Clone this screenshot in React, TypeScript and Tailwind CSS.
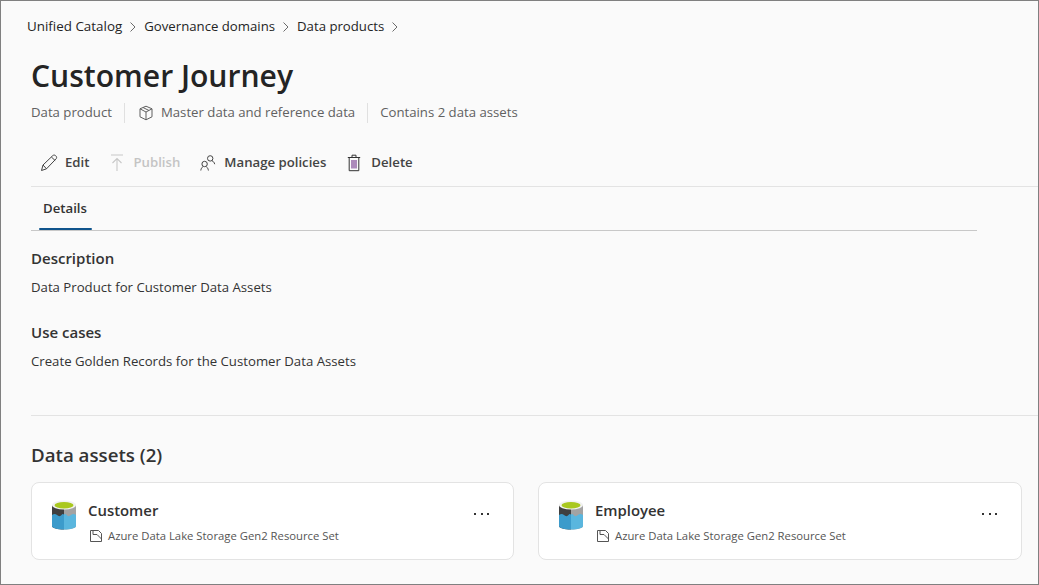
const font = { fontFamily: '"Open Sans", "Noto Sans", sans-serif' };

function Chevron() {
  return (
    <svg width="8" height="12" viewBox="0 0 8 12" fill="none" stroke="#6b6b6b" strokeWidth="1" className="mx-[7px] shrink-0">
      <path d="M1.500 1.500 6 6l-4.500 4.500" />
    </svg>
  );
}

function BoxIcon() {
  return (
    <svg width="16" height="16" viewBox="0 0 16 16" fill="none" stroke="#5f5f5f" strokeWidth="1">
      <path d="M8 1.200 14 3.800v8L8 14.800 2 11.800v-8z" />
      <path d="M2 3.800 8 7l6-3.200M8 7v7.800M5 2.500l6 3" />
    </svg>
  );
}

function PencilIcon() {
  return (
    <svg width="18" height="18" viewBox="0 0 18 18" fill="none" stroke="#444" strokeWidth="1">
      <path d="M1.500 16.500 3 11 12.800 1.600c.8-.7 1.900-.7 2.700 0l.6.600c.7.800.7 1.900 0 2.600L6.500 14.800z" />
      <path d="m3 11 3.500 3.800M11.400 3l3.800 3.600" />
    </svg>
  );
}

function PublishIcon() {
  return (
    <svg width="14" height="18" viewBox="0 0 14 18" fill="none" stroke="#c8c8c8" strokeWidth="1.100">
      <path d="M1 1h12M7 17V4.500M2.500 9 7 4.500 11.500 9" />
    </svg>
  );
}

function PeopleIcon() {
  return (
    <svg width="16" height="16" viewBox="0 0 16 16" fill="none" stroke="#444" strokeWidth="1">
      <circle cx="10.200" cy="3.400" r="2.700" />
      <circle cx="4.600" cy="9" r="2.700" />
      <path d="M.8 15.500c.2-1.800 1-3 2-3.800M8.400 15.500c-.2-1.800-1-3-2-3.800M12 5.700c1.400.7 2.300 1.800 2.700 3.500" />
    </svg>
  );
}

function TrashIcon() {
  return (
    <svg width="14" height="18" viewBox="0 0 14 18" fill="none" stroke="#333" strokeWidth="1">
      <path d="M.8 3.500h12.400M5 3.500V1.200h4v2.300M2.200 3.500v13.200h9.600V3.500" />
      <path d="M5 6v8.500M7 6v8.500M9 6v8.500" stroke="#6d2f86" strokeWidth="1.100" />
    </svg>
  );
}

function LakeIcon() {
  return (
    <svg width="26" height="30" viewBox="0 0 26 30" className="shrink-0">
      <path d="M1 5v21c0 2 5.400 3.500 12 3.500V5z" fill="#3f3f3f" />
      <path d="M25 5v21c0 2-5.400 3.500-12 3.500V5z" fill="#a3a3a3" />
      <path d="M1 15c2-1.500 3.500-1.500 5 0s3.500 1.500 4.500 0 1.500-1 2.500-.5v15C6.400 29.500 1 28 1 26z" fill="#3c9bcb" />
      <path d="M25 15c-2-1.500-3.500-1.500-5 0s-3.500 1.500-4.500 0-1.500-1-2.500-.5v15c6.600 0 12-1.500 12-3.500z" fill="#5ab6de" />
      <ellipse cx="13" cy="5" rx="12" ry="4.500" fill="#f2f2f2" />
      <ellipse cx="13" cy="5.200" rx="9.500" ry="3.200" fill="#a9c81f" />
    </svg>
  );
}

function ResourceIcon() {
  return (
    <svg width="12" height="12" viewBox="0 0 12 12" fill="none" stroke="#555" strokeWidth="1" className="shrink-0 ml-[2px]">
      <path d="M.5.500h8l3 3v8H.5z" />
      <path d="M3 .5v4h4l4.500 4.500" />
    </svg>
  );
}

function AssetCard({ name, width }: { name: string; width: string }) {
  return (
    <div className={`${width} h-[78px] flex items-start bg-white border border-[#e3e3e3] rounded-[8px] pl-[19px] pr-[23px] pt-[17px]`}>
      <LakeIcon />
      <div className="ml-[11px] flex-1 min-w-0">
        <div className="text-[14.9px] leading-[20px] font-semibold text-[#333]">{name}</div>
        <div className="mt-[8px] flex items-center gap-[6px] text-[11.3px] leading-[16px] text-[#555]">
          <ResourceIcon />
          Azure Data Lake Storage Gen2 Resource Set
        </div>
      </div>
      <div className="flex gap-[4.5px] mt-[13px] mr-[1px]">
        <span className="w-[2px] h-[2px] bg-[#333]" />
        <span className="w-[2px] h-[2px] bg-[#333]" />
        <span className="w-[2px] h-[2px] bg-[#333]" />
      </div>
    </div>
  );
}

export default function App() {
  return (
    <div style={font} className="w-[1039px] h-[585px] overflow-hidden bg-[#fafafa] border border-[#808080] text-[#333]">
      <nav className="h-[50px] pt-[1px] pl-[26px] flex items-center text-[13.2px] text-[#242424]">
        <span className="text-[13.4px]">Unified Catalog</span>
        <Chevron />
        <span>Governance domains</span>
        <Chevron />
        <span>Data products</span>
        <Chevron />
      </nav>

      <h1 className="pl-[30px] h-[50px] text-[30.1px] leading-[50px] font-semibold text-[#242424]">Customer Journey</h1>

      <div className="pl-[30px] mt-[1px] h-[22px] flex items-center text-[13.2px] text-[#616161]">
        <span>Data product</span>
        <span className="w-px h-[20px] bg-[#e0e0e0] ml-[12px] mr-[13px]" />
        <span className="flex items-center gap-[7px]">
          <BoxIcon />
          Master data and reference data
        </span>
        <span className="w-px h-[20px] bg-[#e0e0e0] mx-[12px]" />
        <span>Contains 2 data assets</span>
      </div>

      <div className="pl-[39px] mt-[27px] h-[24px] flex items-center text-[13.2px] font-semibold text-[#444]">
        <span className="flex items-center gap-[7px]"><PencilIcon />Edit</span>
        <span className="flex items-center gap-[9px] ml-[21px] text-[#c4c4c4]"><PublishIcon />Publish</span>
        <span className="flex items-center gap-[8px] ml-[20px]"><PeopleIcon />Manage policies</span>
        <span className="flex items-center gap-[10px] ml-[21px]"><TrashIcon />Delete</span>
      </div>

      <div className="ml-[30px] mt-[11px] border-t border-[#e3e3e3]" />

      <div className="ml-[30px] w-[946px] h-[44px] border-b border-[#c8c8c8] pl-[8px]">
        <div className="relative inline-block h-[43px] w-[53px] pl-[4px] pt-[11px] text-[13.2px] leading-[20px] font-semibold text-[#333]">
          Details
          <span className="absolute left-0 right-0 bottom-0 h-[2px] rounded-full bg-[#0f548c]" />
        </div>
      </div>

      <section className="pl-[30px]">
        <h2 className="mt-[17px] text-[15px] leading-[20px] font-semibold">Description</h2>
        <p className="mt-[9px] text-[13.2px] leading-[20px] text-[#333]">Data Product for Customer Data Assets</p>
        <h2 className="mt-[25px] text-[15px] leading-[20px] font-semibold">Use cases</h2>
        <p className="mt-[9px] text-[13.2px] leading-[20px] text-[#333]">Create Golden Records for the Customer Data Assets</p>
      </section>

      <div className="ml-[30px] mt-[44px] border-t border-[#e3e3e3]" />

      <section className="pl-[30px]">
        <h2 className="mt-[27px] text-[18.7px] leading-[24px] font-semibold">Data assets (2)</h2>
        <div className="mt-[15px] flex gap-[24px]">
          <AssetCard name="Customer" width="w-[483px]" />
          <AssetCard name="Employee" width="w-[484px]" />
        </div>
      </section>
    </div>
  );
}
